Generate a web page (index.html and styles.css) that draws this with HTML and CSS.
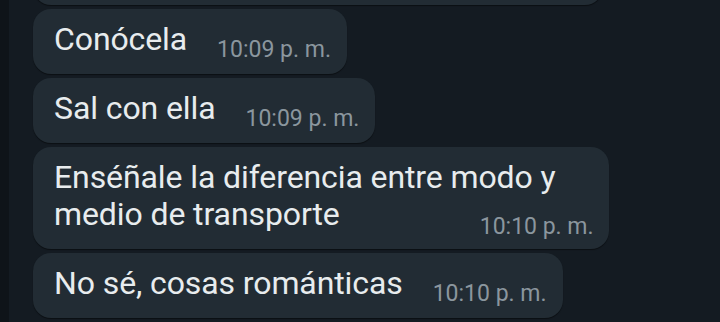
FILE: index.html
```html
<!DOCTYPE html>
<html lang="es">
<head>
<meta charset="utf-8">
<title>Chat</title>
<link rel="stylesheet" href="styles.css">
</head>
<body>
<main class="chat">
  <div class="bubble bubble-cut"></div>
  <div class="bubble">
    <span class="text">Conócela</span>
    <span class="time">10:09 p. m.</span>
  </div>
  <div class="bubble">
    <span class="text">Sal con ella</span>
    <span class="time">10:09 p. m.</span>
  </div>
  <div class="bubble bubble-multi">
    <span class="text">Enséñale la diferencia entre modo y<br>medio de transporte</span>
    <span class="time">10:10 p. m.</span>
  </div>
  <div class="bubble">
    <span class="text">No sé, cosas románticas</span>
    <span class="time">10:10 p. m.</span>
  </div>
</main>
</body>
</html>
```

FILE: styles.css
```css
html, body {
  margin: 0;
  padding: 0;
  height: 100%;
}
body {
  background: #0f1419;
  overflow: hidden;
  font-family: Roboto, "Noto Sans", sans-serif;
}
.chat {
  margin-left: 9px;
  height: 100%;
  background: #141b22;
  padding-left: 24px;
  display: flex;
  flex-direction: column;
  align-items: flex-start;
  gap: 4px;
}
.bubble {
  background: #222c34;
  border-radius: 18px;
  box-shadow: 0 1px 1px rgba(0, 0, 0, 0.45);
  display: grid;
  grid-template-columns: auto auto;
  column-gap: 30px;
  padding: 12px 16px 16px 21px;
}
.bubble-cut {
  width: 570px;
  height: 60px;
  padding: 0;
  margin-top: -55px;
}
.text {
  color: #e8ecee;
  font-size: 32px;
  line-height: 37px;
  letter-spacing: -0.1px;
}
.time {
  color: #8b969e;
  font-size: 23px;
  line-height: 22px;
  align-self: end;
  margin-bottom: -3px;
  white-space: nowrap;
}
.bubble-multi {
  grid-template-columns: auto;
  padding-right: 15px;
}
.bubble-multi .text {
  padding-right: 38px;
}
.bubble-multi .text,
.bubble-multi .time {
  grid-row: 1;
  grid-column: 1;
}
.bubble-multi .time {
  justify-self: end;
  margin-bottom: -5px;
}
```
